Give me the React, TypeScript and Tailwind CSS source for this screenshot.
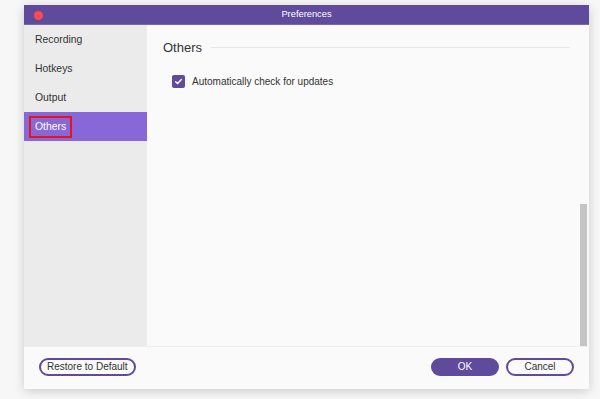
export default function App() {
  const items = ["Recording", "Hotkeys", "Output", "Others"];

  return (
    <div className="w-[600px] h-[399px] bg-[#f7f7f7] pl-6 pt-[5px] font-['Helvetica','Liberation_Sans',Arial,sans-serif] overflow-hidden">
      <div className="w-[565px] h-[384px] flex flex-col bg-[#fafafa] shadow-[0_2px_10px_rgba(0,0,0,0.18)]">
        {/* title bar */}
        <div className="relative h-5 flex items-center justify-center bg-[#5f4a9c] border-b border-[#7a67b3]">
          <span className="absolute left-[10px] top-[6px] w-[9px] h-[9px] rounded-full bg-[#fd4b4f]" />
          <span className="text-white text-[9.3px]">Preferences</span>
        </div>

        <div className="flex h-[321px]">
          {/* sidebar */}
          <div className="w-[123px] bg-[#ebebeb] flex flex-col">
            {items.map((item) => {
              const active = item === "Others";
              return (
                <div
                  key={item}
                  className={
                    active
                      ? "h-[29px] flex items-center pl-[5px] bg-[#8867d8] text-white text-[10.4px]"
                      : "h-[29px] flex items-center pl-[11px] pt-px text-[#333] text-[10.4px]"
                  }
                >
                  {active ? (
                    <span className="h-[22px] flex items-center px-[4px] border-2 border-[#e8141c]">{item}</span>
                  ) : (
                    item
                  )}
                </div>
              );
            })}
          </div>

          {/* content */}
          <div className="flex-1 flex bg-[#fafafa]">
            <div className="flex-1 pl-4 pr-2 pt-[13px]">
              <div className="flex items-center gap-[9px]">
                <span className="text-[13px] text-[#333]">Others</span>
                <div className="flex-1 h-px bg-[#e6e6e6]" />
              </div>
              <label className="mt-[16px] ml-[9px] flex items-center gap-[7px] text-[10px] text-[#333]">
                <span className="w-[13px] h-[13px] rounded-[2px] bg-[#5f4a9c] flex items-center justify-center">
                  <svg width="9" height="9" viewBox="0 0 10 10" fill="none">
                    <path d="M1.8 5.2 L4 7.2 L8.2 2.8" stroke="white" strokeWidth="1.6" strokeLinecap="round" strokeLinejoin="round" />
                  </svg>
                </span>
                Automatically check for updates
              </label>
            </div>
            <div className="w-[11px] flex flex-col justify-end pl-[2px] pr-[2px]">
              <div className="h-[142px] bg-[#c4c4c4]" />
            </div>
          </div>
        </div>

        {/* footer */}
        <div className="flex-1 flex items-center justify-between border-t border-[#eeeeee] pl-[15px] pr-[15px] pb-[2px]">
          <button className="h-[18px] px-[6px] rounded-full border-2 border-[#5f4a9c] text-[10px] text-[#333] leading-none">
            Restore to Default
          </button>
          <div className="flex gap-[7px]">
            <button className="w-[68px] h-[18px] rounded-full bg-[#5f4a9c] text-white text-[10px] leading-none">OK</button>
            <button className="w-[68px] h-[18px] rounded-full border-2 border-[#5f4a9c] text-[#333] text-[10px] leading-none">
              Cancel
            </button>
          </div>
        </div>
      </div>
    </div>
  );
}
